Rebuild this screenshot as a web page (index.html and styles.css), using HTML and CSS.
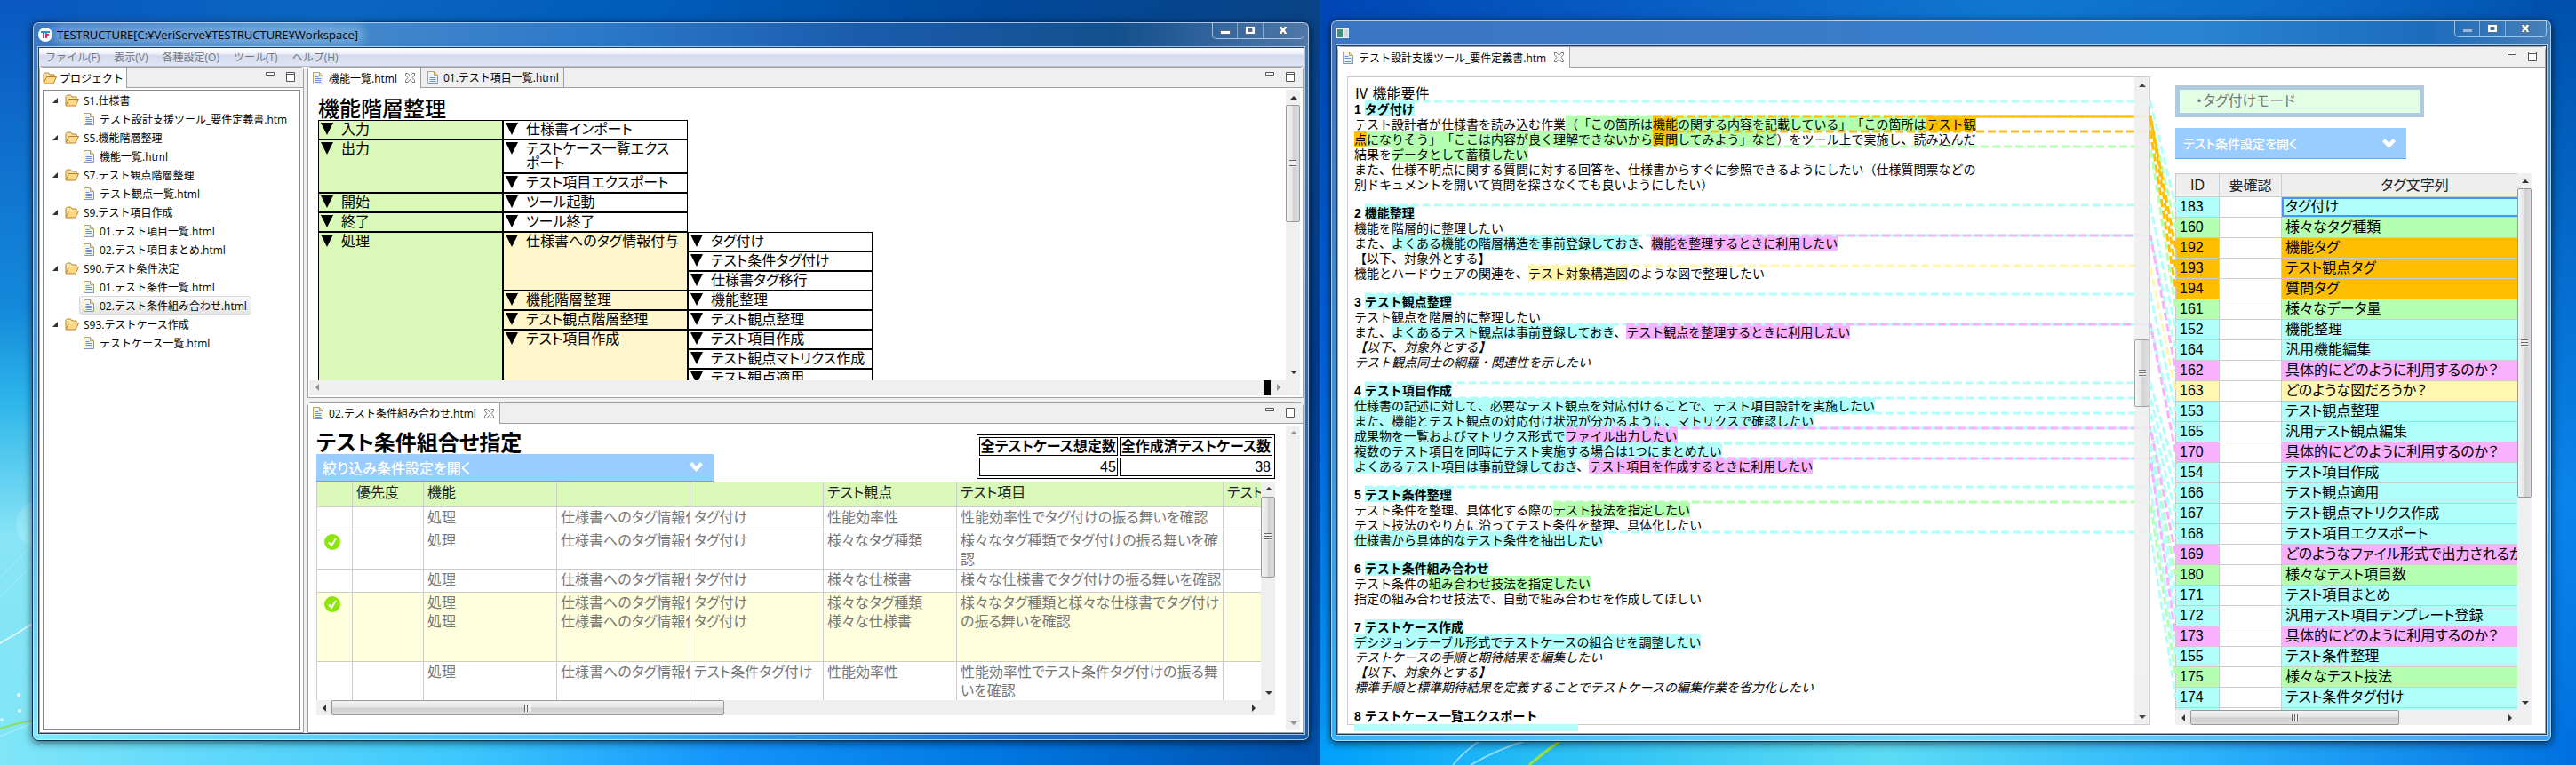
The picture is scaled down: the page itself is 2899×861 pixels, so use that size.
FILE: index.html
```html
<!DOCTYPE html>
<html lang="ja">
  <head>
    <meta charset="UTF-8" />
    <title>TESTRUCTURE</title>
    <link rel="stylesheet" href="styles.css">
  </head>
  <body>
    <svg class="defs" aria-hidden="true">
      <symbol id="i-folder" viewBox="0 0 16 14">
        <path d="M1 12V2.5L2.5 1h4L8 3h5v2.500" fill="#fbe3a2" stroke="#b8802b" />
        <path d="M1 13l3.500-7.500h11L12 13z" fill="#ffd98a" stroke="#b8802b" />
      </symbol>
      <symbol id="i-file" viewBox="0 0 12 14">
        <path d="M.5.5h7l4 4v9H.5z" fill="#eef4ff" stroke="#8794b5" />
        <path d="M.5 13V.5h7" fill="none" stroke="#bfa45c" />
        <path d="M7.500.5v4h4" fill="#f3d98b" stroke="#bfa45c" />
        <path d="M2.500 5.500h4M2.500 7.500h7M2.500 9.500h7M2.500 11.500h7" stroke="#6f8fd0" />
      </symbol>
      <symbol id="i-close" viewBox="0 0 11 11">
        <path d="M.5.5h2.500l2.500 3 2.500-3h2.500v2l-2.500 3 2.500 3v2H8l-2.500-3-2.500 3H.5v-2l2.500-3-2.500-3z" fill="#fff" stroke="#777" />
      </symbol>
      <symbol id="i-min" viewBox="0 0 10 11">
        <path d="M.5.5h9v3h-9z" fill="#fff" stroke="#555" />
      </symbol>
      <symbol id="i-max" viewBox="0 0 10 11">
        <path d="M.5.5h9v10h-9zM.5 2.500h9" fill="#fff" stroke="#555" />
      </symbol>
      <symbol id="i-chevron" viewBox="0 0 15 11">
        <path d="M0 3l3-3 4.500 5L12 0l3 3-7.500 8z" fill="#fff" />
      </symbol>
      <symbol id="i-check" viewBox="0 0 18 18">
        <circle cx="9" cy="9" r="9" fill="#8ce60a" />
        <path d="M5 9.500l3 3.500 5-8" fill="none" stroke="#fff" stroke-width="2" />
      </symbol>
      <symbol id="w-min" viewBox="0 0 12 12">
        <path d="M.5 6.500h11v4H.5z" fill="#fff" stroke="#5d6b85" />
      </symbol>
      <symbol id="w-max" viewBox="0 0 12 12">
        <path d="M.5 1.500h11v9H.5zM4 4.500h4v3H4z" fill="#fff" fill-rule="evenodd" stroke="#5d6b85" />
      </symbol>
      <symbol id="w-close" viewBox="0 0 12 12">
        <path d="M1 1.500h3.500l1.500 2 1.500-2H11L8.500 6l2.500 4.500H7.500L6 8l-1.500 2.500H1L3.500 6z" fill="#fff" stroke="#5d6b85" />
      </symbol>
    </svg>

    <div class="desktop left">
      <svg class="streaks" viewBox="0 0 40 420" aria-hidden="true">
        <circle cx="44" cy="149" r="26" fill="#fff" opacity=".15" />
        <path d="M0 209Q18 190 36 172M0 232Q18 213 36 194" fill="none" stroke="#fff" opacity=".3" />
        <path d="M0 283Q18 273 36 261" fill="none" stroke="#fff" stroke-width="2" opacity=".7" />
        <path d="M0 379Q18 373 36 370" fill="none" stroke="#8fdc5a" stroke-width="2" />
        <path d="M0 388l36-15" fill="none" stroke="#fff" opacity=".4" />
        <circle cx="21" cy="341" r="2" fill="#fff" opacity=".8" />
        <circle cx="22" cy="359" r="2" fill="#fff" opacity=".8" />
        <circle cx="2" cy="369" r="2" fill="#fff" opacity=".6" />
      </svg>
      <section class="window">
        <header class="titlebar">
          <svg class="logo" viewBox="0 0 16 16"><circle cx="8" cy="8" r="8" fill="#fff" /><path d="M3 5h10M9 5v5" stroke="#2a8fd0" stroke-width="2" fill="none" /><path d="M6 6v6M9 12V8h3" stroke="#d0307c" stroke-width="2" fill="none" /></svg>
          <span class="caption">TESTRUCTURE[C:¥VeriServe¥TESTRUCTURE¥Workspace]</span>
          <div class="winbtns">
            <button aria-label="最小化"><svg><use href="#w-min" /></svg></button>
            <button aria-label="最大化"><svg><use href="#w-max" /></svg></button>
            <button aria-label="閉じる"><svg><use href="#w-close" /></svg></button>
          </div>
        </header>
        <div class="client">
          <nav class="menubar">
            <button>ファイル(F)</button>
            <button>表示(V)</button>
            <button>各種設定(O)</button>
            <button>ツール(T)</button>
            <button>ヘルプ(H)</button>
          </nav>
          <div class="workbench">
            <aside class="pane project">
              <div class="tabs">
                <button class="tab active"><svg class="folder"><use href="#i-folder" /></svg>プロジェクト</button>
                <div class="tools">
                  <button aria-label="最小化"><svg><use href="#i-min" /></svg></button>
                  <button aria-label="最大化"><svg><use href="#i-max" /></svg></button>
                </div>
              </div>
              <ul class="tree">
                <li><a class="dir" href="#"><svg class="folder"><use href="#i-folder" /></svg>S1.仕様書</a></li>
                <li><a href="#"><svg class="file"><use href="#i-file" /></svg>テスト設計支援ツール_要件定義書.htm</a></li>
                <li><a class="dir" href="#"><svg class="folder"><use href="#i-folder" /></svg>S5.機能階層整理</a></li>
                <li><a href="#"><svg class="file"><use href="#i-file" /></svg>機能一覧.html</a></li>
                <li><a class="dir" href="#"><svg class="folder"><use href="#i-folder" /></svg>S7.テスト観点階層整理</a></li>
                <li><a href="#"><svg class="file"><use href="#i-file" /></svg>テスト観点一覧.html</a></li>
                <li><a class="dir" href="#"><svg class="folder"><use href="#i-folder" /></svg>S9.テスト項目作成</a></li>
                <li><a href="#"><svg class="file"><use href="#i-file" /></svg>01.テスト項目一覧.html</a></li>
                <li><a href="#"><svg class="file"><use href="#i-file" /></svg>02.テスト項目まとめ.html</a></li>
                <li><a class="dir" href="#"><svg class="folder"><use href="#i-folder" /></svg>S90.テスト条件決定</a></li>
                <li><a href="#"><svg class="file"><use href="#i-file" /></svg>01.テスト条件一覧.html</a></li>
                <li><a class="selected" href="#"><svg class="file"><use href="#i-file" /></svg>02.テスト条件組み合わせ.html</a></li>
                <li><a class="dir" href="#"><svg class="folder"><use href="#i-folder" /></svg>S93.テストケース作成</a></li>
                <li><a href="#"><svg class="file"><use href="#i-file" /></svg>テストケース一覧.html</a></li>
              </ul>
            </aside>

            <div class="editors">
              <section class="pane">
                <div class="tabs">
                  <button class="tab active"><svg class="file"><use href="#i-file" /></svg>機能一覧.html<svg class="close"><use href="#i-close" /></svg></button>
                  <button class="tab"><svg class="file"><use href="#i-file" /></svg>01.テスト項目一覧.html</button>
                  <div class="tools">
                    <button aria-label="最小化"><svg><use href="#i-min" /></svg></button>
                    <button aria-label="最大化"><svg><use href="#i-max" /></svg></button>
                  </div>
                </div>
                <div class="scroller">
                  <div class="view functions">
                    <h1>機能階層整理</h1>
                    <table class="hierarchy">
                      <tr><td class="l1"><div><button aria-label="開閉"></button>入力</div></td><td><div><button aria-label="開閉"></button>仕様書インポート</div></td></tr>
                      <tr><td class="l1" rowspan="2"><div><button aria-label="開閉"></button>出力</div></td><td><div><button aria-label="開閉"></button><span>テストケース一覧エクス<br>ポート</span></div></td></tr>
                      <tr><td><div><button aria-label="開閉"></button>テスト項目エクスポート</div></td></tr>
                      <tr><td class="l1"><div><button aria-label="開閉"></button>開始</div></td><td><div><button aria-label="開閉"></button>ツール起動</div></td></tr>
                      <tr><td class="l1"><div><button aria-label="開閉"></button>終了</div></td><td><div><button aria-label="開閉"></button>ツール終了</div></td></tr>
                      <tr>
                        <td class="l1" rowspan="8"><div><button aria-label="開閉"></button>処理</div></td>
                        <td class="l2" rowspan="3"><div><button aria-label="開閉"></button>仕様書へのタグ情報付与</div></td>
                        <td><div><button aria-label="開閉"></button>タグ付け</div></td>
                      </tr>
                      <tr><td><div><button aria-label="開閉"></button>テスト条件タグ付け</div></td></tr>
                      <tr><td><div><button aria-label="開閉"></button>仕様書タグ移行</div></td></tr>
                      <tr><td class="l2"><div><button aria-label="開閉"></button>機能階層整理</div></td><td><div><button aria-label="開閉"></button>機能整理</div></td></tr>
                      <tr><td class="l2"><div><button aria-label="開閉"></button>テスト観点階層整理</div></td><td><div><button aria-label="開閉"></button>テスト観点整理</div></td></tr>
                      <tr><td class="l2" rowspan="3"><div><button aria-label="開閉"></button>テスト項目作成</div></td><td><div><button aria-label="開閉"></button>テスト項目作成</div></td></tr>
                      <tr><td><div><button aria-label="開閉"></button>テスト観点マトリクス作成</div></td></tr>
                      <tr><td><div><button aria-label="開閉"></button>テスト観点適用</div></td></tr>
                    </table>
                  </div>
                  <div class="bar v" style="--pos: 0%; --len: 45%"><i></i><span><b></b></span><i></i></div>
                  <div class="bar h off corner"><i></i><span></span><em></em><i></i></div>
                </div>
              </section>

              <section class="pane">
                <div class="tabs">
                  <button class="tab active"><svg class="file"><use href="#i-file" /></svg>02.テスト条件組み合わせ.html<svg class="close"><use href="#i-close" /></svg></button>
                  <div class="tools">
                    <button aria-label="最小化"><svg><use href="#i-min" /></svg></button>
                    <button aria-label="最大化"><svg><use href="#i-max" /></svg></button>
                  </div>
                </div>
                <div class="scroller single">
                  <div class="view combos">
                    <div class="combo-head">
                      <div>
                        <h1 class="strong">テスト条件組合せ指定</h1>
                        <button class="opener">絞り込み条件設定を開く<svg><use href="#i-chevron" /></svg></button>
                      </div>
                      <table class="totals">
                        <tr><th>全テストケース想定数</th><th>全作成済テストケース数</th></tr>
                        <tr><td>45</td><td>38</td></tr>
                      </table>
                    </div>
                    <div class="scroller inner">
                      <div class="clip">
                        <table class="combo-table">
                          <colgroup><col class="c40"><col class="c80"><col class="c150"><col class="c150"><col class="c150"><col class="c150"><col class="c300"><col class="c150"></colgroup>
                          <tr><th></th><th>優先度</th><th>機能</th><th></th><th></th><th>テスト観点</th><th>テスト項目</th><th>テスト</th></tr>
                          <tr><td></td><td></td><td>処理</td><td>仕様書へのタグ情報付与</td><td>タグ付け</td><td>性能効率性</td><td class="wrap">性能効率性でタグ付けの振る舞いを確認</td><td></td></tr>
                          <tr class="two"><td><svg class="check"><use href="#i-check" /></svg></td><td></td><td>処理</td><td>仕様書へのタグ情報付与</td><td>タグ付け</td><td>様々なタグ種類</td><td class="wrap">様々なタグ種類でタグ付けの振る舞いを確認</td><td></td></tr>
                          <tr><td></td><td></td><td>処理</td><td>仕様書へのタグ情報付与</td><td>タグ付け</td><td>様々な仕様書</td><td class="wrap">様々な仕様書でタグ付けの振る舞いを確認</td><td></td></tr>
                          <tr class="tall"><td><svg class="check"><use href="#i-check" /></svg></td><td></td><td>処理<br>処理</td><td>仕様書へのタグ情報付与<br>仕様書へのタグ情報付与</td><td>タグ付け<br>タグ付け</td><td>様々なタグ種類<br>様々な仕様書</td><td class="wrap">様々なタグ種類と様々な仕様書でタグ付けの振る舞いを確認</td><td></td></tr>
                          <tr class="two"><td></td><td></td><td>処理</td><td>仕様書へのタグ情報付与</td><td>テスト条件タグ付け</td><td>性能効率性</td><td class="wrap">性能効率性でテスト条件タグ付けの振る舞いを確認</td><td></td></tr>
                          <tr><td></td><td></td><td></td><td></td><td></td><td></td><td></td><td></td></tr>
                        </table>
                      </div>
                      <div class="bar v" style="--pos: 0%; --len: 43%"><i></i><span><b></b></span><i></i></div>
                      <div class="bar h" style="--pos: 0%; --len: 43%"><i></i><span><b></b></span><i></i></div>
                    </div>
                  </div>
                  <div class="bar v off"><i></i><span></span><i></i></div>
                </div>
              </section>
            </div>
          </div>
        </div>
      </section>
    </div>

    <div class="desktop right">
      <svg class="streaks wide" viewBox="0 0 300 30" aria-hidden="true">
        <path d="M150 30Q165 12 185 0M170 30Q200 12 240 0" fill="none" stroke="#fff" stroke-width="2" opacity=".5" />
        <path d="M236 30Q252 16 272 2" fill="none" stroke="#9ae23c" stroke-width="3" />
      </svg>
      <section class="window second">
        <header class="titlebar">
          <svg class="appicon" viewBox="0 0 14 12"><path d="M0 0h14v12H0z" fill="#eef1f4" /><path d="M1 2h6v9H1z" fill="#3f8f7c" /><path d="M9 2h4v9H9z" fill="#cfd8dc" /></svg>
          <div class="winbtns">
            <button aria-label="最小化" disabled><svg><use href="#w-min" /></svg></button>
            <button aria-label="最大化"><svg><use href="#w-max" /></svg></button>
            <button aria-label="閉じる"><svg><use href="#w-close" /></svg></button>
          </div>
        </header>
        <div class="client">
          <section class="pane">
            <div class="tabs">
              <button class="tab active"><svg class="file"><use href="#i-file" /></svg>テスト設計支援ツール_要件定義書.htm<svg class="close"><use href="#i-close" /></svg></button>
              <div class="tools">
                <button aria-label="最小化"><svg><use href="#i-min" /></svg></button>
                <button aria-label="最大化"><svg><use href="#i-max" /></svg></button>
              </div>
            </div>
            <div class="tagging">
              <div class="doc">
                <article>
                  <h2>Ⅳ 機能要件</h2>
                  <section>
                    <h3>1 <mark class="c" data-tag="183">タグ付け</mark></h3>
                    <p>テスト設計者が仕様書を読み込む作業<mark class="g" data-tag="160">（「この箇所は<mark class="o" data-tag="192">機能</mark>の関する内容を記載している」「この箇所は<mark class="o" data-tag="193">テスト観点</mark>になりそう」「ここは内容が良く理解できないから<mark class="o" data-tag="194">質問</mark>してみよう」など</mark>）をツール上で実施し、読み込んだ結果を<mark class="g" data-tag="161">データとして蓄積したい</mark></p>
                    <p>また、仕様不明点に関する質問に対する回答を、仕様書からすぐに参照できるようにしたい（仕様質問票などの別ドキュメントを開いて質問を探さなくても良いようにしたい）</p>
                  </section>
                  <section>
                    <h3>2 <mark class="c" data-tag="152">機能整理</mark></h3>
                    <p>機能を階層的に整理したい</p>
                    <p>また、<mark class="c" data-tag="164">よくある機能の階層構造を事前登録しておき</mark>、<mark class="p" data-tag="162">機能を整理するときに利用したい</mark></p>
                    <p>【以下、対象外とする】</p>
                    <p>機能とハードウェアの関連を、<mark class="y" data-tag="163">テスト対象構造図</mark>のような図で整理したい</p>
                  </section>
                  <section>
                    <h3>3 <mark class="c" data-tag="153">テスト観点整理</mark></h3>
                    <p>テスト観点を階層的に整理したい</p>
                    <p>また、<mark class="c" data-tag="165">よくあるテスト観点は事前登録しておき</mark>、<mark class="p" data-tag="170">テスト観点を整理するときに利用したい</mark></p>
                    <p class="out">【以下、対象外とする】</p>
                    <p class="out">テスト観点同士の網羅・関連性を示したい</p>
                  </section>
                  <section>
                    <h3>4 <mark class="c" data-tag="154">テスト項目作成</mark></h3>
                    <p><mark class="c" data-tag="166">仕様書の記述に対して、必要なテスト観点を対応付けることで、テスト項目設計を実施したい</mark></p>
                    <p><mark class="c" data-tag="167">また、機能とテスト観点の対応付け状況が分かるように、マトリクスで確認したい</mark></p>
                    <p><mark class="c" data-tag="168">成果物を一覧およびマトリクス形式で</mark><mark class="p" data-tag="169">ファイル出力したい</mark></p>
                    <p><mark class="c" data-tag="180 171">複数のテスト項目を同時にテスト実施する場合は1つにまとめたい</mark></p>
                    <p><mark class="c" data-tag="172">よくあるテスト項目は事前登録しておき</mark>、<mark class="p" data-tag="173">テスト項目を作成するときに利用したい</mark></p>
                  </section>
                  <section>
                    <h3>5 <mark class="c" data-tag="155">テスト条件整理</mark></h3>
                    <p>テスト条件を整理、具体化する際の<mark class="g" data-tag="175">テスト技法を指定したい</mark></p>
                    <p>テスト技法のやり方に沿ってテスト条件を整理、具体化したい</p>
                    <p><mark class="c" data-tag="174">仕様書から具体的なテスト条件を抽出したい</mark></p>
                  </section>
                  <section>
                    <h3>6 <mark class="c">テスト条件組み合わせ</mark></h3>
                    <p>テスト条件の<mark class="g">組み合わせ技法を指定したい</mark></p>
                    <p>指定の組み合わせ技法で、自動で組み合わせを作成してほしい</p>
                  </section>
                  <section>
                    <h3>7 <mark class="c">テストケース作成</mark></h3>
                    <p><mark class="c">デシジョンテーブル形式でテストケースの組合せを調整したい</mark></p>
                    <p class="out">テストケースの手順と期待結果を編集したい</p>
                    <p class="out">【以下、対象外とする】</p>
                    <p class="out">標準手順と標準期待結果を定義することでテストケースの編集作業を省力化したい</p>
                  </section>
                  <section>
                    <h3>8 テストケース一覧エクスポート</h3>
                    <div class="cut"></div>
                  </section>
                </article>
                <div class="bar v" style="--pos: 40%; --len: 11%"><i></i><span><b></b></span><i></i></div>
              </div>

              <div class="tags">
                <div class="mode">・タグ付けモード</div>
                <button class="opener">テスト条件設定を開く<svg><use href="#i-chevron" /></svg></button>
                <div class="scroller inner">
                  <div class="clip">
                    <table class="tag-table">
                      <colgroup><col class="id"><col class="confirm"><col class="c300"></colgroup>
                      <tr><th>ID</th><th>要確認</th><th>タグ文字列</th></tr>
                      <tr class="c current" id="t183"><td>183</td><td></td><td>タグ付け</td></tr>
                      <tr class="g" id="t160"><td>160</td><td></td><td>様々なタグ種類</td></tr>
                      <tr class="o" id="t192"><td>192</td><td></td><td>機能タグ</td></tr>
                      <tr class="o" id="t193"><td>193</td><td></td><td>テスト観点タグ</td></tr>
                      <tr class="o" id="t194"><td>194</td><td></td><td>質問タグ</td></tr>
                      <tr class="g" id="t161"><td>161</td><td></td><td>様々なデータ量</td></tr>
                      <tr class="c" id="t152"><td>152</td><td></td><td>機能整理</td></tr>
                      <tr class="c" id="t164"><td>164</td><td></td><td>汎用機能編集</td></tr>
                      <tr class="p" id="t162"><td>162</td><td></td><td>具体的にどのように利用するのか？</td></tr>
                      <tr class="y" id="t163"><td>163</td><td></td><td>どのような図だろうか？</td></tr>
                      <tr class="c" id="t153"><td>153</td><td></td><td>テスト観点整理</td></tr>
                      <tr class="c" id="t165"><td>165</td><td></td><td>汎用テスト観点編集</td></tr>
                      <tr class="p" id="t170"><td>170</td><td></td><td>具体的にどのように利用するのか？</td></tr>
                      <tr class="c" id="t154"><td>154</td><td></td><td>テスト項目作成</td></tr>
                      <tr class="c" id="t166"><td>166</td><td></td><td>テスト観点適用</td></tr>
                      <tr class="c" id="t167"><td>167</td><td></td><td>テスト観点マトリクス作成</td></tr>
                      <tr class="c" id="t168"><td>168</td><td></td><td>テスト項目エクスポート</td></tr>
                      <tr class="p" id="t169"><td>169</td><td></td><td>どのようなファイル形式で出力されるか</td></tr>
                      <tr class="g" id="t180"><td>180</td><td></td><td>様々なテスト項目数</td></tr>
                      <tr class="c" id="t171"><td>171</td><td></td><td>テスト項目まとめ</td></tr>
                      <tr class="c" id="t172"><td>172</td><td></td><td>汎用テスト項目テンプレート登録</td></tr>
                      <tr class="p" id="t173"><td>173</td><td></td><td>具体的にどのように利用するのか？</td></tr>
                      <tr class="c" id="t155"><td>155</td><td></td><td>テスト条件整理</td></tr>
                      <tr class="g" id="t175"><td>175</td><td></td><td>様々なテスト技法</td></tr>
                      <tr class="c" id="t174"><td>174</td><td></td><td>テスト条件タグ付け</td></tr>
                      <tr class="c"><td></td><td></td><td></td></tr>
                    </table>
                  </div>
                  <div class="bar v" style="--pos: 0%; --len: 61%"><i></i><span><b></b></span><i></i></div>
                  <div class="bar h" style="--pos: 0%; --len: 67%"><i></i><span><b></b></span><i></i></div>
                </div>
              </div>
              <svg id="links" aria-hidden="true"></svg>
            </div>
          </section>
        </div>
      </section>
    </div>

    <script>
      const links = document.getElementById("links");
      const doc = document.querySelector(".doc");

      // dashed connector from each tagged phrase to its row in the tag list
      function drawLinks() {
        const base = links.getBoundingClientRect();
        const edge = doc.getBoundingClientRect().right - base.left;
        links.innerHTML = "";

        document.querySelectorAll("mark[data-tag]").forEach((mark) => {
          const from = mark.getClientRects()[0];
          mark.dataset.tag.split(" ").forEach((id) => {
            const row = document.getElementById("t" + id);
            const to = row.getBoundingClientRect();
            const line = document.createElementNS("http://www.w3.org/2000/svg", "polyline");
            const y = from.top - base.top;
            line.setAttribute(
              "points",
              [from.left - base.left, y, edge, y, to.left - base.left, to.top + to.height / 2 - base.top].join(" ")
            );
            line.setAttribute("class", row.classList[0]);
            links.appendChild(line);
          });
        });
      }

      drawLinks();
      window.addEventListener("resize", drawLinks);
    </script>
  </body>
</html>
```
FILE: styles.css
```css
* {
  box-sizing: border-box;
}

body {
  margin: 0;
  height: 100vh;
  display: grid;
  grid-template: minmax(0, 1fr) / minmax(0, 1485fr) minmax(0, 1414fr);
  overflow: hidden;
  font-family: "Open Sans", "Noto Sans CJK JP", sans-serif;
  font-size: 12px;
  color: #000;
}

button {
  font: inherit;
  color: inherit;
  background: none;
  border: 0;
  padding: 0;
}

a {
  color: inherit;
  text-decoration: none;
}

h1,
h2,
h3,
p,
ul {
  margin: 0;
  padding: 0;
}

.defs {
  position: absolute;
  width: 0;
  height: 0;
}

/* desktops */
.desktop {
  position: relative;
  display: flex;
}

.desktop.left {
  padding: 24px 11px 27px 36px;
  background:
    linear-gradient(to right, #7fe6f8, #3cc8fc 35%, #1494fb 55%, #0078e4 75%, #0050aa) bottom / 100% 40px no-repeat,
    linear-gradient(to bottom, #0a58c0, #1488da 40%, #2cb4ea 52%, #88e4f6 70%, #7fe6f8) left / 60px 100% no-repeat,
    linear-gradient(to bottom, #0a4486, #003c90 50%, #0050aa) right / 30px 100% no-repeat,
    linear-gradient(to right, #0a58c0, #0a66c0 25%, #005cba 50%, #00489a 75%, #0a4486);
}

.desktop.right {
  padding: 22px 27px 26px 12px;
  background:
    linear-gradient(to right, #00a0fc, #2cc0f4 20%, #5cdcf4 45%, #2cb4fc 70%, #0070e0) bottom / 100% 40px no-repeat,
    linear-gradient(to bottom, #0046b4, #0064dc 50%, #00a0fc) left / 30px 100% no-repeat,
    linear-gradient(to bottom, #0050ac, #0468c8 30%, #0a84ec 65%, #0070e0) right / 50px 100% no-repeat,
    linear-gradient(to right, #0046b4, #0a60c4 30%, #1078d0 55%, #0a68c4 80%, #0050ac);
}

.streaks {
  position: absolute;
  left: 0;
  bottom: 0;
  width: 40px;
  height: 420px;
}

.streaks.wide {
  width: 300px;
  height: 30px;
}

/* windows */
.window {
  position: relative;
  flex: 1;
  min-width: 0;
  display: flex;
  flex-direction: column;
  padding: 0 5px 7px 6px;
  border: 1px solid #12305a;
  border-radius: 7px;
  background:
    linear-gradient(to right, #3c78c0, #4a8ccc 20%, #2a78c8 45%, #1a5cac 65%, #14508e 85%, #5078a8) top / 100% 30px no-repeat,
    linear-gradient(to right, #7cecfc, #40b8f8 45%, #1c70d0 75%, #1c5ca8) bottom / 100% 8px no-repeat,
    linear-gradient(to bottom, #3c78c0, #4aa0e0 50%, #7cecfc) left / 8px 100% no-repeat,
    linear-gradient(to bottom, #5078a8, #1c5ca8) right / 8px 100% no-repeat;
  box-shadow: inset 0 0 0 1px rgba(220, 240, 255, 0.7), 0 2px 10px rgba(0, 0, 0, 0.6);
}

.window.second {
  background:
    linear-gradient(to right, #3c74c4, #3a7cc8 40%, #2c84d4 70%, #1c6cbc 90%, #4880b8) top / 100% 30px no-repeat,
    linear-gradient(to right, #30b4fc, #6ce0fc 50%, #3ca0f8) bottom / 100% 8px no-repeat,
    linear-gradient(to bottom, #3c74c4, #30b4fc) left / 8px 100% no-repeat,
    linear-gradient(to bottom, #4880b8, #3ca0f8) right / 8px 100% no-repeat;
}

.titlebar {
  height: 28px;
  display: flex;
  align-items: center;
  gap: 4px;
  flex: none;
}

.logo {
  width: 16px;
  height: 16px;
}

.appicon {
  width: 14px;
  height: 12px;
}

.caption {
  font-size: 13px;
  line-height: 16px;
  padding: 0 4px 0 1px;
  border-radius: 8px;
  background: rgba(190, 220, 245, 0.3);
  box-shadow: 0 0 8px 4px rgba(190, 220, 245, 0.3);
}

.winbtns {
  display: flex;
  align-self: flex-start;
  margin-left: auto;
  width: 104px;
  height: 19px;
  border: 1px solid rgba(210, 230, 250, 0.7);
  border-top: 0;
  border-radius: 0 0 5px 5px;
}

.winbtns button {
  flex: 28;
  display: flex;
  align-items: center;
  justify-content: center;
}

.winbtns button:last-child {
  flex: 46;
}

.winbtns button + button {
  border-left: 1px solid rgba(210, 230, 250, 0.5);
}

.winbtns button:disabled {
  opacity: 0.5;
}

.winbtns svg {
  width: 12px;
  height: 12px;
}

.client {
  flex: 1;
  min-height: 0;
  display: flex;
  flex-direction: column;
  background: #f0f0f0;
  border: 1px solid #1c3c64;
  box-shadow: 0 0 0 1px rgba(220, 240, 255, 0.7);
}

.menubar {
  height: 21px;
  flex: none;
  display: flex;
  align-items: center;
  gap: 16px;
  padding-left: 7px;
  color: #777;
  background: linear-gradient(to bottom, #fff, #eceff8 35%, #d5dbee 40%, #e0e5f5);
  border-bottom: 1px solid #b5b9c8;
}

.workbench {
  flex: 1;
  min-height: 0;
  display: flex;
  gap: 4px;
}

.editors {
  flex: 1;
  min-width: 0;
  display: flex;
  flex-direction: column;
  gap: 5px;
}

/* panes and tabs */
.pane {
  flex: 1;
  min-width: 0;
  min-height: 0;
  display: flex;
  flex-direction: column;
  background: #fff;
  border: 1px solid #a0a0a0;
  border-radius: 4px 4px 0 0;
}

.pane.project {
  flex: none;
  width: 298px;
}

.tabs {
  height: 23px;
  flex: none;
  display: flex;
  background: #efefef;
}

.tab {
  display: flex;
  align-items: center;
  gap: 6px;
  padding: 0 3px 0 5px;
  border-right: 1px solid #a0a0a0;
  border-bottom: 1px solid #a0a0a0;
  white-space: nowrap;
}

.tab.active {
  background: #fff;
  border-bottom: 0;
}

.tab.active + .tab {
  padding: 0 5px 0 7px;
}

.project .tab {
  gap: 3px;
  padding: 0 3px;
}

.tab .close {
  width: 11px;
  height: 11px;
  margin: 0 3px;
}

.tools {
  flex: 1;
  display: flex;
  justify-content: flex-end;
  gap: 13px;
  padding: 5px 9px 0;
  border-bottom: 1px solid #a0a0a0;
}

.tools button,
.tools svg {
  display: block;
  width: 10px;
  height: 11px;
}

.folder {
  width: 16px;
  height: 14px;
}

.file {
  width: 12px;
  height: 14px;
}

/* project tree */
.tree {
  flex: 1;
  margin: 2px 3px;
  border: 1px solid #828790;
  list-style: none;
}

.tree li {
  height: 21px;
  display: flex;
}

.tree a {
  display: flex;
  align-items: center;
  gap: 6px;
  margin-left: 40px;
  padding: 0 4px;
  border: 1px solid transparent;
  border-radius: 3px;
  white-space: nowrap;
}

.tree .dir {
  margin-left: 5px;
  gap: 5px;
}

.tree .dir::before {
  content: "";
  border-left: 6px solid transparent;
  border-bottom: 6px solid #333;
  margin-right: 3px;
}

.tree .selected {
  border-color: #d9d9d9;
  background: linear-gradient(to bottom, #fafafa, #e5e5e5);
}

/* scroll areas */
.scroller {
  flex: 1;
  min-height: 0;
  display: grid;
  grid-template: minmax(0, 1fr) 17px / minmax(0, 1fr) 16px;
  margin: 2px 3px 2px 1px;
  background: #f0f0f0;
}

.scroller.single {
  grid-template-rows: minmax(0, 1fr);
}

.scroller.inner {
  margin: 0;
}

.bar {
  display: flex;
  background: #efefef;
}

.bar.v {
  flex-direction: column;
}

.bar span {
  flex: 1;
  display: flex;
  flex-direction: inherit;
}

.bar span::before {
  content: "";
  flex: none;
  height: var(--pos);
}

.bar i {
  flex: none;
  width: 17px;
  height: 17px;
  display: flex;
  align-items: center;
  justify-content: center;
}

.bar i::before {
  content: "";
  border: 4px solid transparent;
}

.bar.v i:first-child::before {
  border-width: 0 4px 4px;
  border-bottom-color: #333;
}

.bar.v i:last-child::before {
  border-width: 4px 4px 0;
  border-top-color: #333;
}

.bar.h i:first-child::before {
  border-width: 4px 4px 4px 0;
  border-right-color: #333;
}

.bar.h i:last-child::before {
  border-width: 4px 0 4px 4px;
  border-left-color: #333;
}

.bar.off i {
  opacity: 0.5;
}

.bar em {
  width: 8px;
  background: #000;
}

.bar b {
  display: flex;
  align-items: center;
  justify-content: center;
  border: 1px solid #999;
  border-radius: 2px;
}

.bar.v b {
  height: var(--len);
  background: linear-gradient(to right, #f5f5f5, #e4e4e6 45%, #cfcfd2 55%, #dcdcde);
}

.bar.h b {
  width: var(--len);
  background: linear-gradient(to bottom, #f5f5f5, #e4e4e6 45%, #cfcfd2 55%, #dcdcde);
}

.bar b::before {
  content: "";
  width: 8px;
  height: 8px;
  background: repeating-linear-gradient(to bottom, #666 0 1px, #eee 1px 3px);
}

.bar.h b::before {
  background: repeating-linear-gradient(to right, #666 0 1px, #eee 1px 3px);
}

.view {
  background: #fff;
  overflow: hidden;
  font-family: "Liberation Sans", "Noto Sans CJK JP", sans-serif;
  font-size: 16px;
  font-feature-settings: "palt";
}

h1 {
  font-size: 24px;
  line-height: 24px;
  font-weight: 500;
}

h1.strong {
  font-weight: 700;
}

/* function hierarchy */
.functions {
  padding: 10px 0 0 10px;
}

.hierarchy {
  border-spacing: 0;
  line-height: 16px;
}

.hierarchy td {
  width: 208px;
  padding: 2px;
  border: 1px solid #000;
  vertical-align: top;
}

.hierarchy div {
  display: flex;
  gap: 9px;
}

.hierarchy button {
  flex: none;
  height: 14px;
  border: 7px solid transparent;
  border-top: 14px solid #000;
  border-bottom: 0;
}

.l1 {
  background: #daf8b8;
}

.l2 {
  background: #fff6cc;
}

/* combinations */
.combos {
  display: flex;
  flex-direction: column;
  padding: 8px 12px 17px 8px;
}

.combo-head {
  flex: none;
  display: flex;
  justify-content: space-between;
  align-items: flex-start;
}

.opener {
  width: 447px;
  height: 31px;
  display: flex;
  justify-content: space-between;
  align-items: center;
  padding: 0 12px 0 7px;
  color: #fff;
  font-weight: 500;
  background: #99ccff;
  border-bottom: 1px solid #5fa8f5;
}

.opener svg {
  width: 15px;
  height: 11px;
}

.totals {
  margin-top: 2px;
  border: 1px solid #000;
  border-spacing: 2px;
  line-height: 17px;
}

.totals th,
.totals td {
  padding: 1px;
  border: 1px solid #000;
  text-align: right;
}

.clip {
  overflow: hidden;
  background: #fff;
}

.combo-table,
.tag-table {
  width: 0;
  table-layout: fixed;
  border-collapse: collapse;
  white-space: nowrap;
}

.c40 {
  width: 40px;
}

.c80 {
  width: 80px;
}

.c150 {
  width: 150px;
}

.c300 {
  width: 300px;
}

.combo-table {
  line-height: 21px;
  color: #777;
}

.combo-table th,
.combo-table td {
  height: 26px;
  padding: 1px 0 0 4px;
  border: 1px solid #ccc;
  text-align: left;
  vertical-align: top;
  overflow: hidden;
}

.combo-table th {
  height: 28px;
  font-weight: 400;
  color: #222;
  background: #daf8b8;
}

.combo-table .two td {
  height: 43px;
}

.combo-table .tall td {
  height: 78px;
  background: #ffffdd;
}

.combo-table .wrap {
  white-space: normal;
}

.check {
  display: block;
  width: 18px;
  height: 18px;
  margin: 3px 0 0 4px;
}

/* document and tags */
.tagging {
  position: relative;
  flex: 1;
  min-height: 0;
  display: flex;
  gap: 28px;
  padding: 10px 15px 9px 10px;
}

.doc {
  flex: 1;
  min-width: 0;
  display: flex;
  justify-content: space-between;
  border: 1px solid #ccc;
}

.doc .bar {
  position: relative;
  z-index: 1;
  width: 17px;
  opacity: 0.9;
}

.doc article {
  width: 708px;
  padding: 10px 0 0 7px;
  height: 0;
  font-family: "Liberation Sans", "Noto Sans CJK JP", sans-serif;
  font-size: 14px;
  line-height: 17px;
  text-spacing-trim: space-all;
}

.doc h2 {
  font-size: 16px;
  line-height: 18px;
  font-weight: 400;
}

.doc h3 {
  font-size: 14px;
}

.doc section + section {
  margin-top: 15px;
}

.doc .out {
  font-style: italic;
}

.cut {
  width: 252px;
  height: 8px;
  background: #b0fffa;
}

mark {
  padding: 1px 0 0;
  color: inherit;
}

mark.c,
.c td {
  background: #b0fffa;
}

mark.g,
.g td {
  background: #b5ffb0;
}

mark.o,
.o td {
  background: #ffbf00;
}

mark.p,
.p td {
  background: #f8b0ff;
}

mark.y,
.y td {
  background: #fff6b0;
}

#links {
  position: absolute;
  inset: 0;
  width: 100%;
  height: 100%;
  pointer-events: none;
}

#links polyline {
  fill: none;
  stroke-width: 3;
  stroke-dasharray: 9 4;
}

#links .c {
  stroke: #b0fffa;
}

#links .g {
  stroke: #b5ffb0;
}

#links .o {
  stroke: #ffbf00;
}

#links .p {
  stroke: #f8b0ff;
}

#links .y {
  stroke: #fff6b0;
}

.tags {
  width: 401px;
  display: flex;
  flex-direction: column;
  padding-top: 10px;
  font-family: "Liberation Sans", "Noto Sans CJK JP", sans-serif;
  font-size: 16px;
  font-feature-settings: "palt";
}

.mode {
  width: 280px;
  height: 36px;
  padding-left: 18px;
  line-height: 26px;
  color: #777;
  background: #e3ffe3;
  border: 5px solid #b0cbe0;
}

.tags .opener {
  width: 260px;
  height: 35px;
  margin: 12px 0 16px;
  padding-left: 9px;
  font-size: 14px;
}

.tag-table {
  line-height: 20px;
}

.id {
  width: 49px;
}

.confirm {
  width: 70px;
}

.tag-table th,
.tag-table td {
  height: 23px;
  padding: 0 0 0 4px;
  border: 1px solid #ccc;
  overflow: hidden;
}

.tag-table th {
  height: 26px;
  padding: 0;
  font-weight: 400;
  color: #222;
  background: #eee;
}

.tag-table td:nth-child(2) {
  background: #fff;
}

.current td:last-child {
  box-shadow: inset 0 0 0 2px #4f90f5;
}
```
